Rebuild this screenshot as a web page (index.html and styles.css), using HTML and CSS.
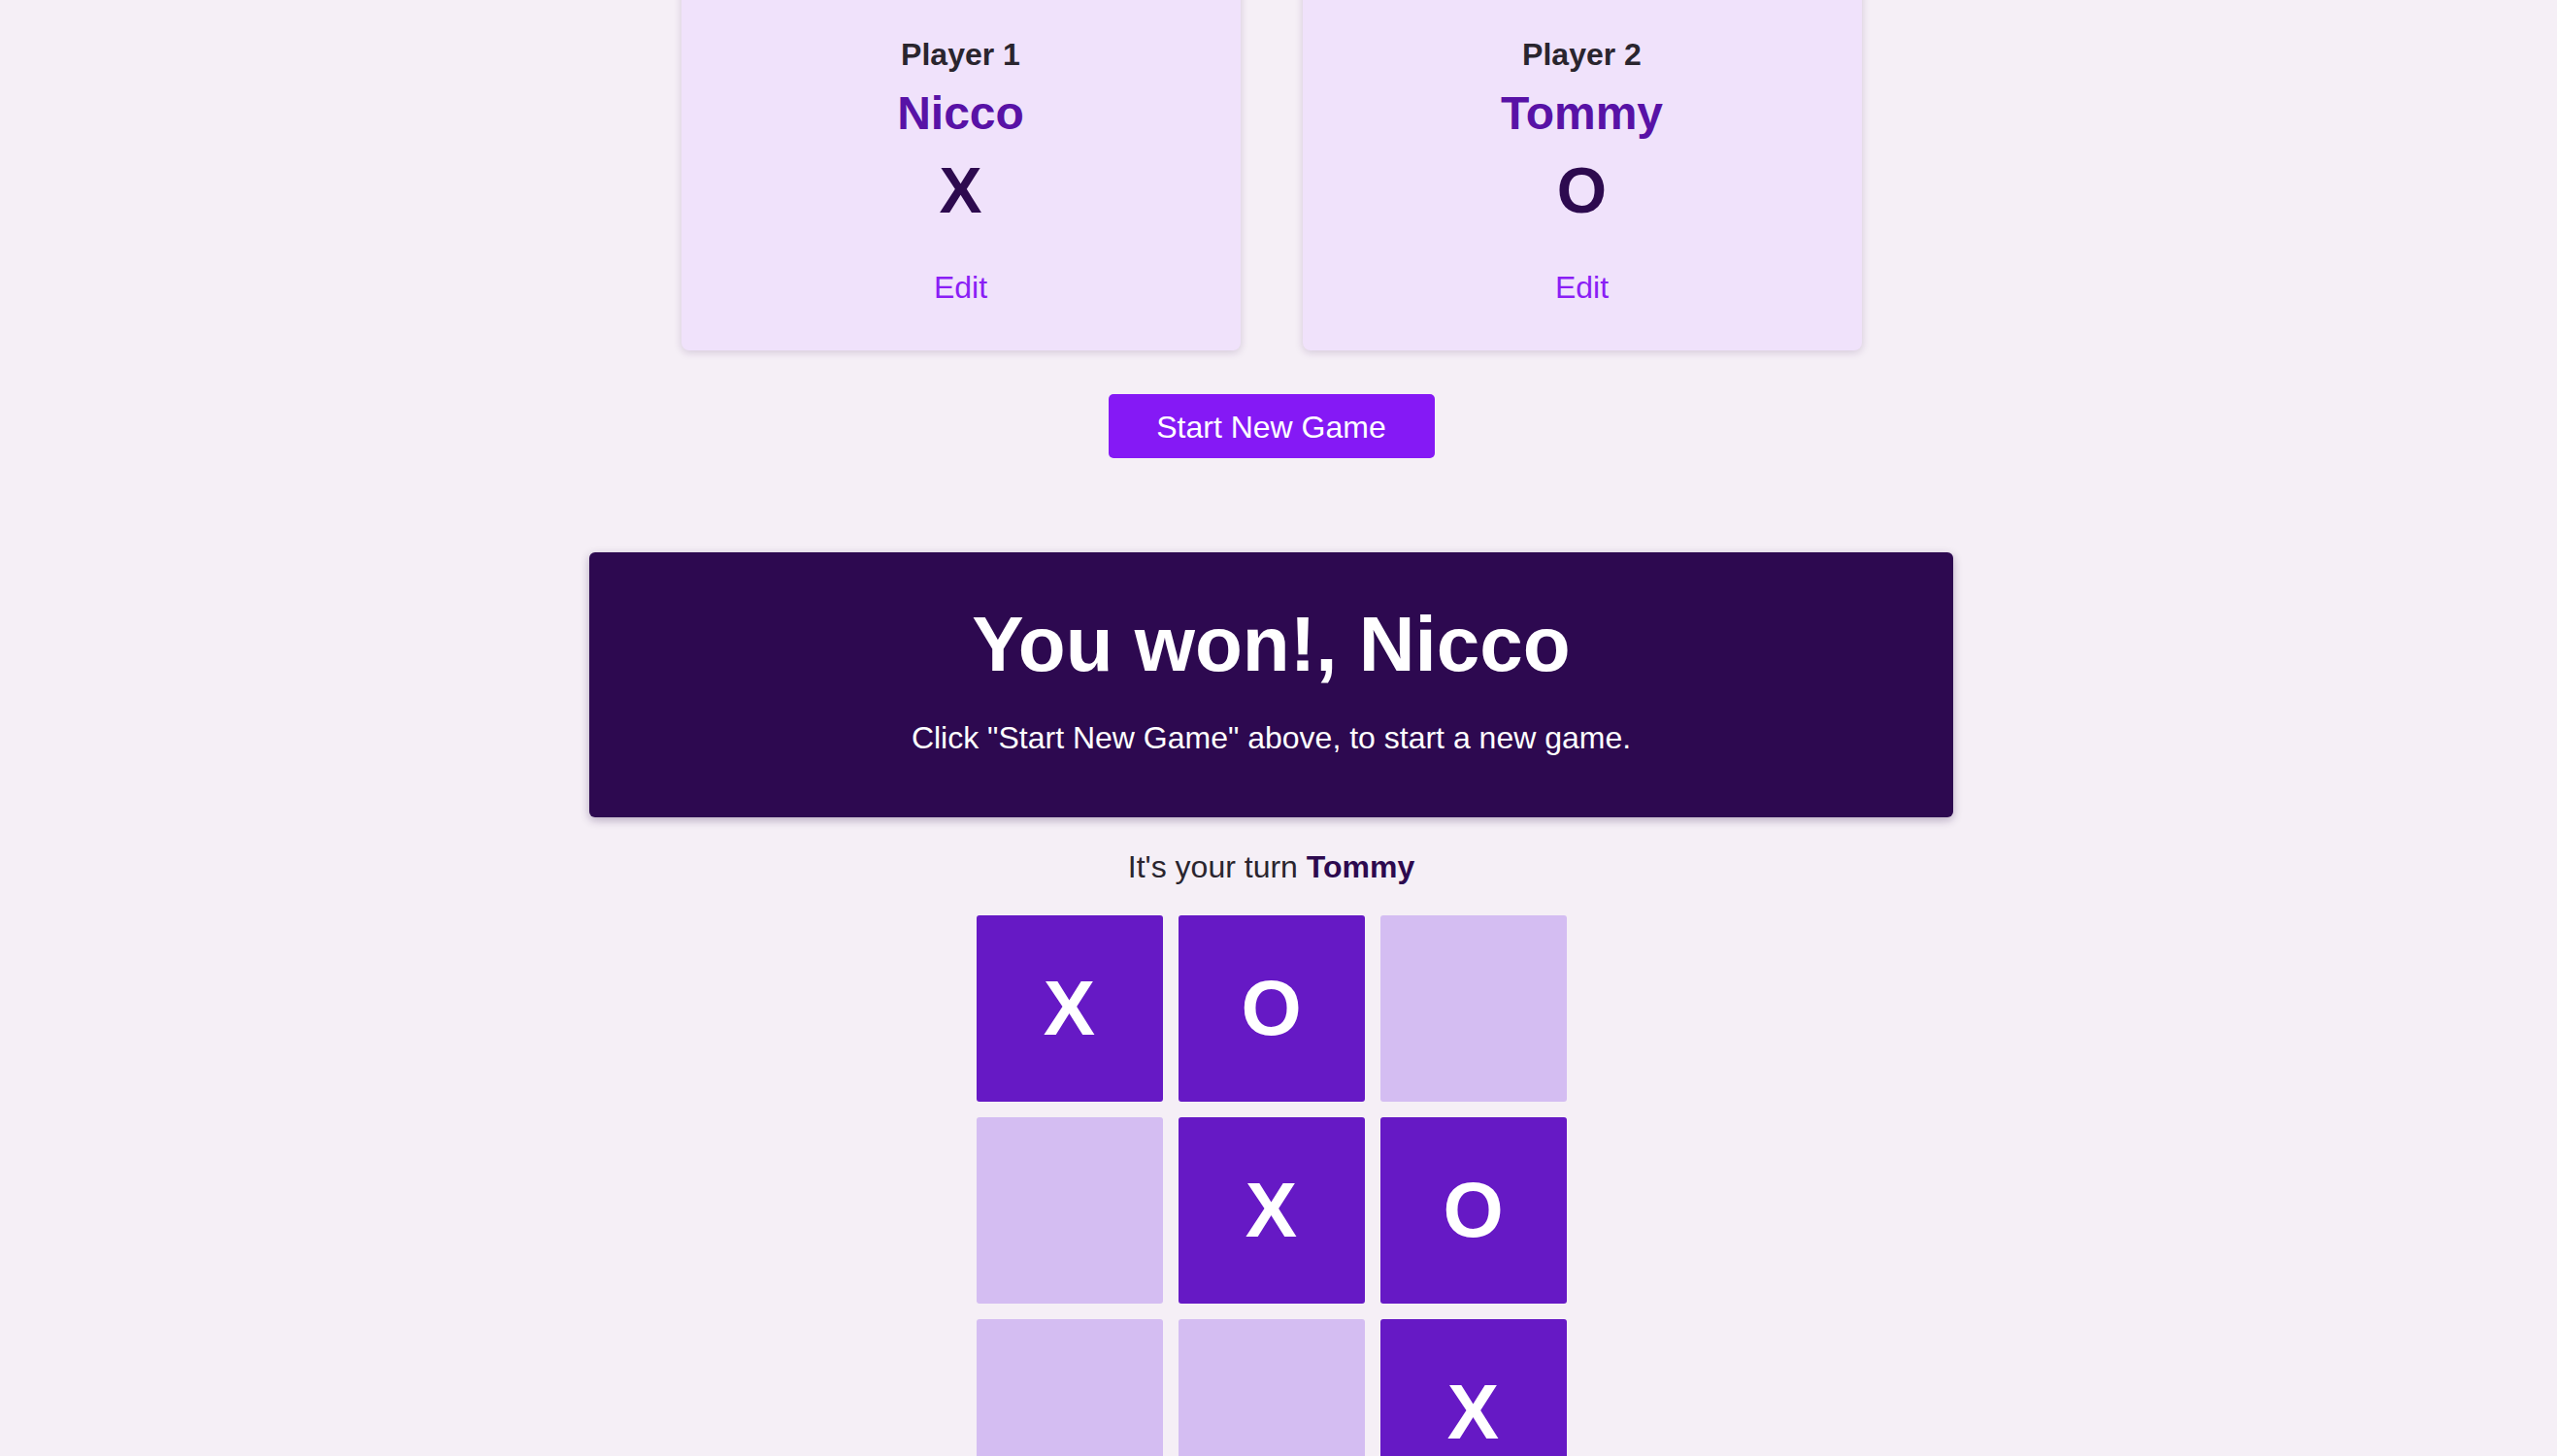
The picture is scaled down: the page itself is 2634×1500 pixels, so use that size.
FILE: index.html
```html
<!DOCTYPE html>
<html lang="en">
<head>
<meta charset="utf-8">
<title>Tic Tac Toe</title>
<link rel="stylesheet" href="styles.css">
</head>
<body>
<main class="page">
  <section class="players">
    <article class="player-card">
      <h2 class="player-label">Player 1</h2>
      <h3 class="player-name">Nicco</h3>
      <p class="player-symbol">X</p>
      <button class="edit-btn">Edit</button>
    </article>
    <article class="player-card">
      <h2 class="player-label">Player 2</h2>
      <h3 class="player-name">Tommy</h3>
      <p class="player-symbol">O</p>
      <button class="edit-btn">Edit</button>
    </article>
  </section>
  <div class="actions">
    <button class="start-btn">Start New Game</button>
  </div>
  <section class="game">
    <article class="game-over">
      <h2 class="game-over-title">You won!, Nicco</h2>
      <p class="game-over-text">Click "Start New Game" above, to start a new game.</p>
    </article>
    <p class="turn">It's your turn <span class="turn-name">Tommy</span></p>
    <ol class="board">
      <li class="cell filled">X</li>
      <li class="cell filled">O</li>
      <li class="cell"></li>
      <li class="cell"></li>
      <li class="cell filled">X</li>
      <li class="cell filled">O</li>
      <li class="cell"></li>
      <li class="cell"></li>
      <li class="cell filled">X</li>
    </ol>
  </section>
</main>
</body>
</html>
```
FILE: styles.css
```css
html {
  overflow: hidden;
}
body {
  margin: 0;
  background: #f5eff6;
  font-family: "Liberation Sans", Arial, Helvetica, sans-serif;
  color: #2a252e;
}
.page {
  padding-right: 15px;
  display: flex;
  flex-direction: column;
  align-items: center;
}
.players {
  display: flex;
  justify-content: center;
  gap: 64px;
  margin-top: -24px;
}
.player-card {
  width: 576px;
  box-sizing: border-box;
  padding: 60px 32px 45px;
  background: #f0e2fb;
  border-radius: 8px;
  box-shadow: 0 2px 8px rgba(60, 20, 90, 0.18);
  display: flex;
  flex-direction: column;
  align-items: center;
  text-align: center;
}
.player-label {
  margin: 0;
  font-size: 32px;
  line-height: 40px;
  font-weight: 700;
  color: #2a252e;
}
.player-name {
  margin: 13px 0 0;
  font-size: 48px;
  line-height: 56px;
  font-weight: 700;
  color: #5812a6;
}
.player-symbol {
  margin: 15px 0 0;
  font-size: 66px;
  line-height: 72px;
  font-weight: 700;
  color: #2d0a4f;
}
.edit-btn {
  margin-top: 44px;
  padding: 0;
  border: none;
  background: none;
  font-family: inherit;
  font-size: 32px;
  line-height: 40px;
  color: #8a1ef5;
  cursor: pointer;
}
.actions {
  margin-top: 45px;
  display: flex;
  justify-content: center;
}
.start-btn {
  width: 336px;
  height: 66px;
  padding: 2px 0 0;
  border: none;
  border-radius: 5px;
  background: #8519f5;
  color: #ffffff;
  font-family: inherit;
  font-size: 32px;
  line-height: 40px;
  cursor: pointer;
}
.game {
  margin-top: 97px;
  display: flex;
  flex-direction: column;
  align-items: center;
}
.game-over {
  width: 1405px;
  box-sizing: border-box;
  padding: 51px 32px 62px;
  background: #2d0950;
  border-radius: 6px;
  box-shadow: 0 3px 10px rgba(40, 10, 70, 0.3);
  text-align: center;
  color: #ffffff;
}
.game-over-title {
  margin: 0;
  font-size: 80px;
  line-height: 88px;
  font-weight: 700;
}
.game-over-text {
  margin: 32px 0 0;
  font-size: 32px;
  line-height: 40px;
}
.turn {
  margin: 31px 0 0;
  font-size: 32px;
  line-height: 40px;
  color: #2a252e;
}
.turn-name {
  font-weight: 700;
  color: #2d0a4f;
}
.board {
  list-style: none;
  margin: 30px 0 0;
  padding: 0;
  display: grid;
  grid-template-columns: repeat(3, 192px);
  grid-auto-rows: 192px;
  gap: 16px;
}
.cell {
  display: flex;
  align-items: center;
  justify-content: center;
  border-radius: 3px;
  background: #d4bdf2;
  color: #ffffff;
  font-size: 80px;
  line-height: 80px;
  font-weight: 700;
}
.cell.filled {
  background: #6619c5;
}
```
